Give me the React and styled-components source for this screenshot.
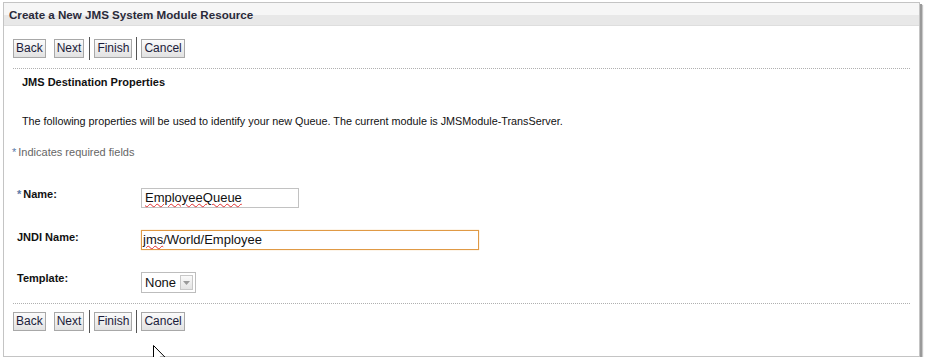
import React from "react";
import styled, { createGlobalStyle } from "styled-components";

const Global = createGlobalStyle`
  html, body { margin: 0; padding: 0; background: #fff; }
  body { font-family: "Liberation Sans", Arial, sans-serif; }
`;

const Panel = styled.div`
  position: relative;
  margin: 2px 0 0 3px;
  width: 915px;
  height: 353px;
  border: 1px solid #c4c4c4;
  background: #fff;
  box-shadow: 2px 2px 0 #9a9a9a, 3px 3px 1px #c8c8c8;
`;

const TitleBar = styled.div`
  height: 22px;
  display: flex;
  align-items: center;
  padding-left: 5px;
  background: linear-gradient(#f6f6f6 0, #f6f6f6 55%, #e8e8e8 56%, #e8e8e8 100%);
  border-bottom: 1px solid #dedede;
  font: bold 11.6px "Liberation Sans", Arial, sans-serif;
  color: #2a2a3a;
`;

const Content = styled.div`
  padding: 13px 9px 0 9px;
`;

const Toolbar = styled.div`
  display: flex;
  align-items: center;
  height: 19px;
`;

const Button = styled.button`
  height: 19px;
  padding: 0 2px;
  margin: 0 ${(p) => p.$gap || 0}px 0 0;
  border: 1px solid #a8a8a8;
  border-radius: 0;
  background: linear-gradient(#fbfbfb, #e2e2e2);
  font: 12px "Liberation Sans", Arial, sans-serif;
  color: #1c1c3a;
  line-height: 17px;
  cursor: default;
`;

const Sep = styled.span`
  width: 1px;
  height: 23px;
  background: #555;
  margin: 0 ${(p) => p.$gap || 0}px 0 0;
`;

const Divider = styled.div`
  border-top: 1px dotted #b0b0b0;
  margin: ${(p) => p.$mt}px 0 0 0;
  width: 897px;
`;

const Heading = styled.div`
  margin: 7px 0 0 9px;
  font: bold 11px "Liberation Sans", Arial, sans-serif;
  color: #111;
`;

const Description = styled.div`
  margin: 27px 0 0 9px;
  font: 10.8px "Liberation Sans", Arial, sans-serif;
  color: #111;
`;

const Required = styled.div`
  margin: 19px 0 0 -1px;
  font: 11px "Liberation Sans", Arial, sans-serif;
  color: #666;
`;

const Star = styled.span`
  color: #5a7aa8;
  margin-right: 2px;
`;

const Form = styled.div`
  margin-top: 30px;
  display: grid;
  grid-template-columns: 128px auto;
  row-gap: 22px;
  justify-items: start;
`;

const Label = styled.div`
  padding: ${(p) => p.$pt || 0}px 0 0 4px;
  font: bold 11px "Liberation Sans", Arial, sans-serif;
  color: #111;
  white-space: nowrap;
`;

const Field = styled.div`
  box-sizing: border-box;
  width: ${(p) => p.$w}px;
  height: 20px;
  border: 1px solid ${(p) => (p.$focus ? "#e09a45" : "#c2c2c2")};
  box-shadow: ${(p) => (p.$focus ? "0 0 1px #f0c080" : "none")};
  padding: 0 0 0 ${(p) => (p.$focus ? 1 : 3)}px;
  font: 13px "Liberation Sans", Arial, sans-serif;
  color: #111;
  line-height: 18px;
  white-space: nowrap;
`;

const Misspelled = styled.span`
  text-decoration: underline wavy #e03030;
  text-decoration-thickness: 1px;
  text-underline-offset: 1px;
`;

const Select = styled.div`
  box-sizing: border-box;
  display: flex;
  align-items: center;
  gap: 4px;
  height: 21px;
  padding: 0 2px 0 3px;
  border: 1px solid #bdbdbd;
  font: 13px "Liberation Sans", Arial, sans-serif;
  color: #111;
`;

const Arrow = styled.span`
  box-sizing: border-box;
  width: 13px;
  height: 15px;
  border: 1px solid #c8c8c8;
  background: linear-gradient(#fafafa, #e4e4e4);
  display: flex;
  align-items: center;
  justify-content: center;
`;

const Spacer = styled.div`
  height: 8px;
`;

const Cursor = styled.svg`
  position: absolute;
  left: 149px;
  top: 342px;
`;

function Buttons() {
  return (
    <Toolbar>
      <Button $gap={8}>Back</Button>
      <Button $gap={5}>Next</Button>
      <Sep $gap={4} />
      <Button $gap={4}>Finish</Button>
      <Sep $gap={4} />
      <Button>Cancel</Button>
    </Toolbar>
  );
}

export default function App() {
  return (
    <>
      <Global />
      <Panel>
        <TitleBar>Create a New JMS System Module Resource</TitleBar>
        <Content>
          <Buttons />
          <Divider $mt={10} />
          <Heading>JMS Destination Properties</Heading>
          <Description>
            The following properties will be used to identify your new Queue. The current module is JMSModule-TransServer.
          </Description>
          <Required>
            <Star>*</Star>Indicates required fields
          </Required>
          <Form>
            <Label $pt={0}>
              <Star>*</Star>Name:
            </Label>
            <Field $w={158}>
              <Misspelled>EmployeeQueue</Misspelled>
            </Field>
            <Label $pt={1}>JNDI Name:</Label>
            <Field $w={338} $focus>
              <Misspelled>jms</Misspelled>/World/Employee
            </Field>
            <Label $pt={0}>Template:</Label>
            <Select>
              None
              <Arrow>
                <svg width="7" height="4" viewBox="0 0 7 4">
                  <path d="M0 0h7L3.5 4z" fill="#9a9a9a" />
                </svg>
              </Arrow>
            </Select>
          </Form>
          <Divider $mt={10} />
          <Spacer />
          <Buttons />
        </Content>
        <Cursor width="14" height="22" viewBox="0 0 14 22">
          <path d="M0.5 0.5V17L4.5 13L7.3 19.5L9.6 18.5L6.9 12.2H12L0.5 0.5z" fill="#fff" stroke="#000" strokeWidth="1" />
        </Cursor>
      </Panel>
    </>
  );
}
